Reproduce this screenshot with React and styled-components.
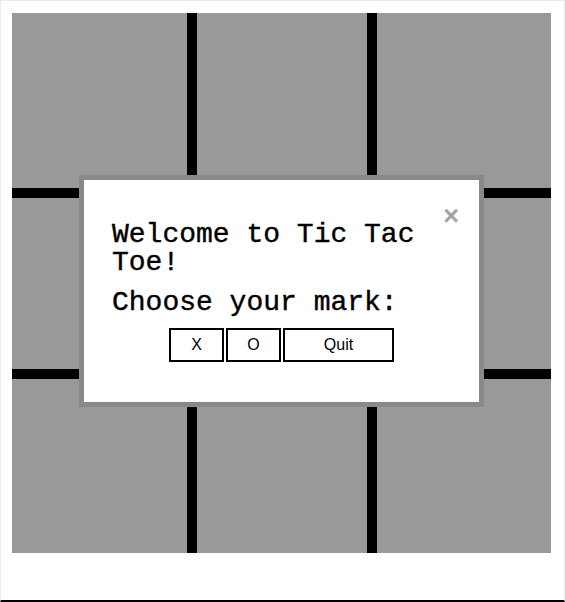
import React from "react";
import styled, { createGlobalStyle } from "styled-components";

const GlobalStyle = createGlobalStyle`
  body {
    margin: 0;
    background: #ffffff;
    font-family: "Liberation Sans", Arial, sans-serif;
  }
`;

const App = () => {
  const cells = Array.from({ length: 9 });
  return (
    <>
      <GlobalStyle />
      <Frame>
        <Board>
          {cells.map((_, index) => (
            <Cell key={index} />
          ))}
          <Modal>
            <Close>×</Close>
            <Title>Welcome to Tic Tac Toe!</Title>
            <Subtitle>Choose your mark:</Subtitle>
            <ButtonRow>
              <MarkButton width={55}>X</MarkButton>
              <MarkButton width={55}>O</MarkButton>
              <MarkButton width={111}>Quit</MarkButton>
            </ButtonRow>
          </Modal>
        </Board>
      </Frame>
    </>
  );
};

const Frame = styled.div`
  box-sizing: border-box;
  width: 565px;
  height: 602px;
  padding: 12px 0 0 11px;
  border: 1px solid #ececec;
  border-bottom: 2px solid #000000;
`;

const Board = styled.div`
  position: relative;
  display: grid;
  grid-template-columns: 175px 170px 174px;
  grid-template-rows: 175px 171px 174px;
  gap: 10px;
  width: 539px;
  background: #000000;
`;

const Cell = styled.div`
  background: #999999;
`;

const Modal = styled.div`
  position: absolute;
  top: 162px;
  left: 67px;
  width: 339px;
  padding: 41px 28px 40px;
  background: #ffffff;
  border: 5px solid #898989;
`;

const Close = styled.span`
  position: absolute;
  top: 23px;
  right: 20px;
  font-size: 27px;
  font-weight: bold;
  line-height: 1;
  color: #a3a3a3;
  cursor: pointer;
`;

const Title = styled.h2`
  margin: 0;
  font-family: "Liberation Mono", "Courier New", monospace;
  font-weight: normal;
  font-size: 28px;
  line-height: 28px;
  color: #000000;
  -webkit-text-stroke: 0.4px #000000;
`;

const Subtitle = styled(Title)`
  margin-top: 12px;
`;

const ButtonRow = styled.div`
  display: flex;
  justify-content: center;
  gap: 2px;
  margin-top: 11px;
`;

const MarkButton = styled.button`
  box-sizing: border-box;
  width: ${(props) => props.width}px;
  height: 34px;
  padding: 0;
  border: 2px solid #000000;
  background: #ffffff;
  font-family: "Liberation Sans", Arial, sans-serif;
  font-size: 16px;
  color: #000000;
`;

export default App;
